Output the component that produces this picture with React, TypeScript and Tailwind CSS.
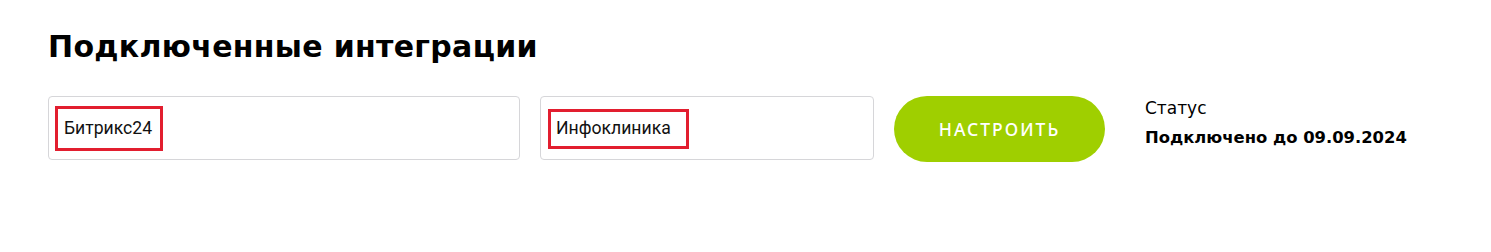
import React from 'react';

const heading = { fontFamily: '"DejaVu Sans", "Noto Sans", sans-serif' };

export default function App() {
  return (
    <div className="bg-white min-h-screen w-full px-12 pt-[27px]" style={heading}>
      <h1 className="text-[30px] leading-[40px] font-bold text-black tracking-[0.3px]">
        Подключенные интеграции
      </h1>
      <div className="flex items-start mt-[29px]">
        <div className="w-[472px] h-[64px] border border-[#d6d6d9] rounded-[4px] flex items-center pl-[6px] pt-[1px]">
          <span className="w-[108px] h-[45px] border-[3px] border-[#e21e2f] flex items-center pl-[6px] text-[17.6px] text-[#111] font-[family-name:Roboto,sans-serif]">
            Битрикс24
          </span>
        </div>
        <div className="w-[334px] h-[64px] border border-[#d6d6d9] rounded-[4px] flex items-center pl-[7px] pt-[1px] ml-[20px]">
          <span className="w-[141px] h-[40px] border-[3px] border-[#e21e2f] flex items-center pl-[5px] text-[17.6px] text-[#111] font-[family-name:Roboto,sans-serif]">
            Инфоклиника
          </span>
        </div>
        <button className="ml-[20px] w-[211px] h-[66px] rounded-full bg-[#9fcf00] text-white text-[17.5px] font-medium tracking-[2px] font-[family-name:Noto_Sans,sans-serif]">
          НАСТРОИТЬ
        </button>
        <div className="ml-[40px] pt-[1px] text-black">
          <div className="text-[17px] leading-[22px]">Статус</div>
          <div className="text-[16.4px] leading-[22px] font-bold mt-[8px]">Подключено до 09.09.2024</div>
        </div>
      </div>
    </div>
  );
}
